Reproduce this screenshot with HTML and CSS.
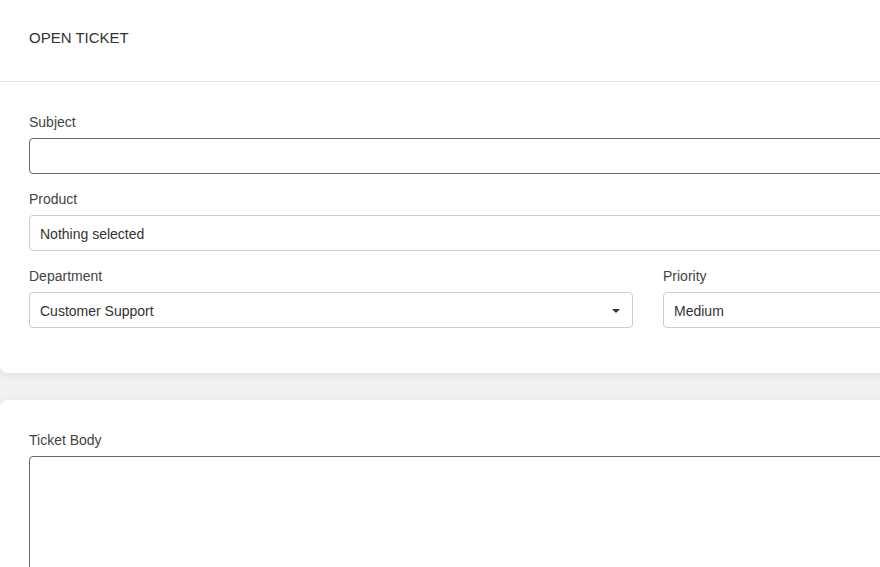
FILE: index.html
```html
<!DOCTYPE html>
<html>
<head>
<meta charset="utf-8">
<link rel="stylesheet" href="styles.css">
</head>
<body>
<div class="page">
  <section class="card card-top">
    <div class="card-header">OPEN TICKET</div>
    <div class="card-body">
      <div class="field">
        <label class="label">Subject</label>
        <div class="input input-dark"></div>
      </div>
      <div class="field">
        <label class="label">Product</label>
        <div class="input">Nothing selected</div>
      </div>
      <div class="row">
        <div class="field">
          <label class="label">Department</label>
          <div class="input select">Customer Support<span class="caret"></span></div>
        </div>
        <div class="field">
          <label class="label">Priority</label>
          <div class="input">Medium</div>
        </div>
      </div>
    </div>
  </section>
  <section class="card card-second">
    <div class="card-body">
      <div class="field">
        <label class="label">Ticket Body</label>
        <div class="textarea"></div>
      </div>
    </div>
  </section>
</div>
</body>
</html>
```

FILE: styles.css
```css
html, body {
  margin: 0;
  padding: 0;
  background: #f1f1f1;
  overflow: hidden;
  height: 567px;
}
body {
  font-family: "Liberation Sans", Arial, sans-serif;
  font-size: 14px;
  color: #333;
}
.page {
  width: 1330px;
  display: flex;
  flex-direction: column;
  gap: 27px;
}
.card {
  background: #fff;
  border-radius: 8px;
  box-shadow: 0 2px 8px rgba(0, 0, 0, 0.08);
}
.card-top {
  border-top-left-radius: 0;
  border-top-right-radius: 0;
}
.card-header {
  height: 82px;
  box-sizing: border-box;
  padding: 29px 29px 0;
  line-height: 18px;
  font-size: 15px;
  color: #333;
  border-bottom: 1px solid #e6e6e6;
}
.card-body {
  padding: 30px 29px 45px;
  display: flex;
  flex-direction: column;
  gap: 15px;
}
.card-second .card-body {
  padding-bottom: 0;
}
.row {
  display: grid;
  grid-template-columns: 604px 604px;
  column-gap: 30px;
}
.field {
  display: flex;
  flex-direction: column;
}
.label {
  line-height: 20px;
  margin-bottom: 6px;
  color: #444;
}
.input {
  height: 36px;
  box-sizing: border-box;
  border: 1px solid #ccc;
  border-radius: 4px;
  padding: 2px 10px 0;
  line-height: 32px;
  color: #333;
  position: relative;
}
.input-dark {
  border-color: #666;
}
.caret {
  position: absolute;
  right: 12px;
  top: 16px;
  width: 0;
  height: 0;
  border-left: 4px solid transparent;
  border-right: 4px solid transparent;
  border-top: 4px solid #333;
}
.textarea {
  height: 140px;
  border: 1px solid #666;
  border-radius: 4px;
}
```
